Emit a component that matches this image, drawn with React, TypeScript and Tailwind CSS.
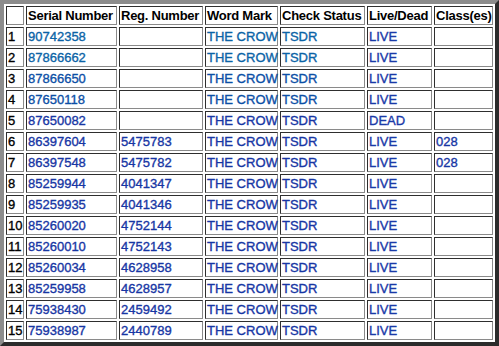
const rows = [
  { serial: "90742358", reg: "", live: "LIVE", cls: "" },
  { serial: "87866662", reg: "", live: "LIVE", cls: "" },
  { serial: "87866650", reg: "", live: "LIVE", cls: "" },
  { serial: "87650118", reg: "", live: "LIVE", cls: "" },
  { serial: "87650082", reg: "", live: "DEAD", cls: "" },
  { serial: "86397604", reg: "5475783", live: "LIVE", cls: "028" },
  { serial: "86397548", reg: "5475782", live: "LIVE", cls: "028" },
  { serial: "85259944", reg: "4041347", live: "LIVE", cls: "" },
  { serial: "85259935", reg: "4041346", live: "LIVE", cls: "" },
  { serial: "85260020", reg: "4752144", live: "LIVE", cls: "" },
  { serial: "85260010", reg: "4752143", live: "LIVE", cls: "" },
  { serial: "85260034", reg: "4628958", live: "LIVE", cls: "" },
  { serial: "85259958", reg: "4628957", live: "LIVE", cls: "" },
  { serial: "75938430", reg: "2459492", live: "LIVE", cls: "" },
  { serial: "75938987", reg: "2440789", live: "LIVE", cls: "" },
];

const cell =
  "border border-t-[#2e2e2e] border-l-[#2e2e2e] border-r-[#8a8a8a] border-b-[#8a8a8a] p-px h-[19px] leading-[15px] whitespace-nowrap text-left align-middle overflow-visible";

// the shot's text is a touch heavier than plain regular weight
const heavy = " [-webkit-text-stroke:0.35px_currentColor]";

export default function App() {
  return (
    <div className="bg-white w-[499px] h-[346px] font-['Liberation_Sans',Arial,sans-serif] text-[13px]">
      <table className="table-fixed border-separate border-spacing-[2px] w-[499px] border-4 border-t-[#8c8c8c] border-l-[#8c8c8c] border-r-[#2b2b2b] border-b-[#2b2b2b]">
        <colgroup>
          <col className="w-[18px]" />
          <col className="w-[91px]" />
          <col className="w-[84px]" />
          <col className="w-[73px]" />
          <col className="w-[85px]" />
          <col className="w-[65px]" />
          <col className="w-[59px]" />
        </colgroup>
        <thead>
          <tr className="text-black font-bold tracking-[-0.25px]">
            <th className={cell}></th>
            <th className={cell}>Serial Number</th>
            <th className={cell}>Reg. Number</th>
            <th className={cell}>Word Mark</th>
            <th className={cell}>Check Status</th>
            <th className={cell}>Live/Dead</th>
            <th className={cell}>Class(es)</th>
          </tr>
        </thead>
        <tbody>
          {rows.map((r, i) => {
            // top rows render a bit more teal in the shot
            const link = i < 2 ? "text-[#0b63a6]" : i < 4 ? "text-[#0c4fa6]" : "text-[#1736a4]";
            return (
              <tr key={r.serial}>
                <td className={cell + " text-black" + heavy}>{i + 1}</td>
                <td className={cell + " " + link + heavy}>{r.serial}</td>
                <td className={cell + " text-[#1736a4]" + heavy}>{r.reg}</td>
                <td className={cell + " " + link + heavy}>THE CROW</td>
                <td className={cell + " " + link + heavy}>TSDR</td>
                <td className={cell + " text-[#1a3aa8]" + heavy}>{r.live}</td>
                <td className={cell + " text-[#1736a4]" + heavy}>{r.cls}</td>
              </tr>
            );
          })}
        </tbody>
      </table>
    </div>
  );
}
